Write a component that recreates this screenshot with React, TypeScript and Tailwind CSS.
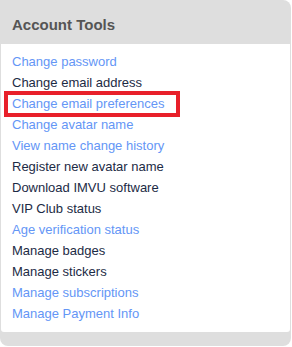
import React from "react";

type Item = { label: string; visited?: boolean; marked?: boolean };

const items: Item[] = [
  { label: "Change password" },
  { label: "Change email address", visited: true },
  { label: "Change email preferences", marked: true },
  { label: "Change avatar name" },
  { label: "View name change history" },
  { label: "Register new avatar name", visited: true },
  { label: "Download IMVU software", visited: true },
  { label: "VIP Club status", visited: true },
  { label: "Age verification status" },
  { label: "Manage badges", visited: true },
  { label: "Manage stickers", visited: true },
  { label: "Manage subscriptions" },
  { label: "Manage Payment Info" },
];

export default function App() {
  return (
    <div className="h-[347px] w-[292px] bg-white font-['Liberation_Sans',Arial,sans-serif]">
      <div className="flex h-[346px] w-[291px] flex-col rounded-tr-[8px] rounded-b-[8px] bg-[#dedede]">
        {/* Header */}
        <div className="h-[44px] pl-[12px] pt-[15px] text-[15px] font-bold leading-[20px] text-[#555]">
          Account Tools
        </div>

        {/* Links */}
        <ul className="mx-px flex flex-col rounded-b-[3px] bg-white pb-[8px] pl-[11px] pt-[7px]">
          {items.map((item) => (
            <li key={item.label} className="relative text-[13px] leading-[21px]">
              <a
                href="#"
                className={item.visited ? "text-[#1c2b45]" : "text-[#6496f6]"}
              >
                {item.label}
              </a>
              {item.marked && (
                <span className="pointer-events-none absolute left-[-8px] top-[-2px] h-[26px] w-[176px] border-[4px] border-[#e8202a]" />
              )}
            </li>
          ))}
        </ul>
      </div>
    </div>
  );
}
